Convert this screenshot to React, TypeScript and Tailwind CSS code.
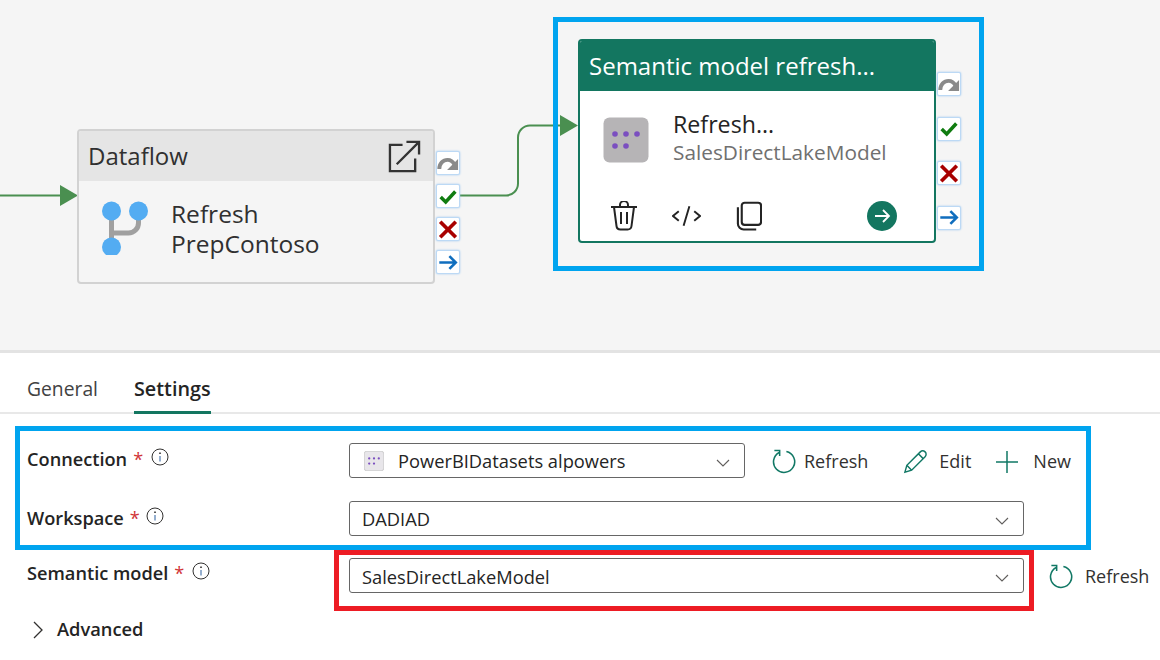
import { ReactNode } from 'react'

const font = "font-['Open_Sans','Noto_Sans',sans-serif]"

function SkipIcon() {
  return (
    <svg viewBox="0 0 24 24" className="w-[23px] h-[23px]">
      <path d="M2.500 18c0-6 4-10 9-10 3.500 0 6 2 7.500 5" fill="none" stroke="#8a8a8a" strokeWidth="4.200" />
      <path d="M23 7v12H11z" fill="#8a8a8a" />
    </svg>
  )
}

function CheckIcon() {
  return (
    <svg viewBox="0 0 24 24" className="w-[23px] h-[23px]">
      <path d="M4 12.500l5.500 5.500L20 6.500" fill="none" stroke="#107c10" strokeWidth="3.800" />
    </svg>
  )
}

function CrossIcon() {
  return (
    <svg viewBox="0 0 24 24" className="w-[23px] h-[23px]">
      <path d="M3.500 3.500l17 17M20.500 3.500l-17 17" fill="none" stroke="#a80000" strokeWidth="4" />
    </svg>
  )
}

function ArrowIcon() {
  return (
    <svg viewBox="0 0 24 24" className="w-[23px] h-[23px]">
      <path d="M2.500 12h18M13.500 5l7 7-7 7" fill="none" stroke="#106ebe" strokeWidth="2.800" />
    </svg>
  )
}

function Ports({ className, gap }: { className: string; gap: string }) {
  const icons = [<SkipIcon />, <CheckIcon />, <CrossIcon />, <ArrowIcon />]
  return (
    <div className={`absolute flex flex-col ${gap} ${className}`}>
      {icons.map((icon, i) => (
        <div
          key={i}
          className="w-6 h-6 bg-white border border-[#bcd9f5] rounded-[2px] flex items-center justify-center shadow-[0_0_2px_#9cc7f0]"
        >
          {icon}
        </div>
      ))}
    </div>
  )
}

function DatasetTile({ big }: { big?: boolean }) {
  return (
    <svg viewBox="0 0 46 46" className={big ? 'w-[46px] h-[46px]' : 'w-[20px] h-[20px]'}>
      <rect x="0.500" y="0.500" width="45" height="45" rx="6" fill={big ? '#b6b4b6' : '#e8e6ea'} stroke={big ? 'none' : '#c8c8c8'} strokeWidth="2" />
      <g fill="#7b4fc0">
        <circle cx="12" cy="17" r={big ? 2.800 : 2.600} />
        <circle cx="23" cy="17" r={big ? 2.800 : 2.600} />
        <circle cx="34" cy="17" r={big ? 2.800 : 2.600} />
        <circle cx="12" cy="29" r={big ? 2.800 : 2.600} />
        <circle cx="23" cy="29" r={big ? 2.800 : 2.600} />
      </g>
    </svg>
  )
}

function RefreshIcon() {
  return (
    <svg viewBox="0 0 26 26" className="w-[25px] h-[25px]" fill="none" stroke="#117865" strokeWidth="1.600">
      <path d="M8.500 3.600A11 11 0 1 0 16 2.600" />
      <path d="M3.500 1.500h5.500v5.800" />
    </svg>
  )
}

function Chevron() {
  return (
    <svg viewBox="0 0 14 8" className="w-[14px] h-2 absolute right-[14px] top-[15px]" fill="none" stroke="#605e5c" strokeWidth="1.100">
      <path d="M1 1l6 6 6-6" />
    </svg>
  )
}

function Info() {
  return (
    <svg viewBox="0 0 18 18" className="w-[18px] h-[18px]" fill="none" stroke="#323130" strokeWidth="1">
      <circle cx="9" cy="9" r="8" />
      <path d="M9 8v5.500" stroke="#2b5f9e" />
      <circle cx="9" cy="5.200" r="0.500" fill="#323130" />
    </svg>
  )
}

function Label({ text, gap }: { text: string; gap: string }) {
  return (
    <div className="w-[322px] shrink-0 flex items-start text-[18.200px] leading-[24px] font-semibold text-[#242424]">
      <span>{text}</span>
      <span className="ml-[6px] text-[#d13438] font-normal">*</span>
      <span className={`${gap} mt-[1px]`}>
        <Info />
      </span>
    </div>
  )
}

function Select({ width, children }: { width: string; children: ReactNode }) {
  return (
    <div className={`relative ${width} h-[35px] shrink-0 border border-[#666] rounded-[3px] flex items-center text-[18.300px] text-[#242424] bg-white`}>
      {children}
      <Chevron />
    </div>
  )
}

function Action({ icon, label, className }: { icon: ReactNode; label: string; className?: string }) {
  return (
    <div className={`flex items-center gap-[8px] text-[18px] text-[#323130] ${className ?? ''}`}>
      {icon}
      <span>{label}</span>
    </div>
  )
}

export default function App() {
  return (
    <div className={`w-[1160px] h-[660px] overflow-hidden bg-white relative ${font}`}>
      {/* Canvas */}
      <div className="relative h-[350px] bg-[#f5f5f5]">
        <svg className="absolute left-0 top-0" width="1160" height="350" fill="none">
          <path d="M0 195.500h62" stroke="#4a8f50" strokeWidth="2" />
          <path d="M60 185l18 10.500-18 10.500z" fill="#4a8f50" />
          <path d="M460 195.500h46a12 12 0 0 0 12-12v-46a12 12 0 0 1 12-12h32" stroke="#4a8f50" strokeWidth="2" />
          <path d="M560 115l18 10.500-18 10.500z" fill="#4a8f50" />
        </svg>

        {/* Dataflow node */}
        <div className="absolute left-[77px] top-[129px] w-[358px] h-[155px] bg-[#f5f5f5] border-2 border-[#d2d2d2] rounded-[4px] overflow-hidden">
          <div className="h-[50px] bg-[#e5e5e5] flex items-center justify-between pl-[9px] pr-[12px]">
            <span className="text-[24px] text-[#303030]">Dataflow</span>
            <svg viewBox="0 0 34 34" className="w-[33px] h-[33px]" fill="none" stroke="#333" strokeWidth="2.400">
              <path d="M15 5H2v27h26V19" />
              <path d="M9 25L32 2M19 2h13v13" />
            </svg>
          </div>
          <div className="flex pl-[22px] pt-[20px]">
            <svg viewBox="0 0 46 54" className="w-[47px] h-[54px] shrink-0">
              <path d="M10 14v30M10 32h17a10 10 0 0 0 10-10v-8" fill="none" stroke="#a0a0a0" strokeWidth="5" />
              <circle cx="10" cy="10" r="9.500" fill="#53acf2" />
              <circle cx="37" cy="10" r="9.500" fill="#53acf2" />
              <circle cx="10" cy="46" r="9.500" fill="#53acf2" />
            </svg>
            <div className="ml-[23px] text-[24.500px] leading-[30px] text-[#303030] -mt-[2px]">
              <div>Refresh</div>
              <div>PrepContoso</div>
            </div>
          </div>
        </div>
        <Ports className="left-[436px] top-[151px]" gap="gap-[9px]" />

        {/* Semantic model node */}
        <div className="absolute left-[578px] top-[39px] w-[358px] h-[204px] bg-white border-2 border-[#137660] rounded-[4px] overflow-hidden">
          <div className="h-[50px] bg-[#137660] flex items-center pl-[9px] text-[24px] text-white">
            Semantic model refresh...
          </div>
          <div className="flex pl-[23px] pt-[26px]">
            <DatasetTile big />
            <div className="ml-[24px] -mt-[8px]">
              <div className="text-[23.200px] leading-[31px] text-[#242424]">Refresh...</div>
              <div className="text-[20.800px] leading-[25px] text-[#707070]">SalesDirectLakeModel</div>
            </div>
          </div>
          <div className="flex items-center pl-[30px] pr-[37px] pt-[36px] justify-between">
            <div className="flex items-center gap-[34px]">
              <svg viewBox="0 0 28 30" className="w-[28px] h-[30px]" fill="none" stroke="#242424" strokeWidth="2">
                <path d="M1 6h26M10 6V4a3 3 0 0 1 8 0v2M4 6l2.500 19a4 4 0 0 0 4 3.500h7a4 4 0 0 0 4-3.500L24 6M11 11v12M17 11v12" />
              </svg>
              <svg viewBox="0 0 30 22" className="w-[29px] h-[22px]" fill="none" stroke="#242424" strokeWidth="2">
                <path d="M7 6l-6 5 6 5M23 6l6 5-6 5M18 1l-6 20" />
              </svg>
              <svg viewBox="0 0 28 30" className="w-[27px] h-[30px]" fill="none" stroke="#242424" strokeWidth="2.200">
                <rect x="7" y="1.200" width="20" height="23" rx="3" />
                <path d="M3 6v17a6 6 0 0 0 6 6h13" />
              </svg>
            </div>
            <svg viewBox="0 0 30 30" className="w-[30px] h-[30px]">
              <circle cx="15" cy="15" r="15" fill="#137660" />
              <path d="M8 15h14M16 9l6 6-6 6" fill="none" stroke="#fff" strokeWidth="1.800" />
            </svg>
          </div>
        </div>
        <Ports className="left-[937px] top-[72px]" gap="gap-[20.500px]" />

        {/* Highlight */}
        <div className="absolute left-[553px] top-[17px] w-[431px] h-[254px] border-[5px] border-[#00a4ef]" />
      </div>

      {/* Tabs */}
      <div className="border-t-[3px] border-[#e3e3e3]">
        <div className="h-[61px] border-b-2 border-[#e8e8e8] flex pl-[27px] gap-[36px]">
          <div className="h-full pt-[22px] text-[19.300px] text-[#424242]">General</div>
          <div className="h-[61px] pt-[23px] text-[19.800px] leading-[26px] font-semibold text-[#242424] border-b-[3px] border-[#137660]">Settings</div>
        </div>
      </div>

      {/* Form */}
      <div className="pl-[27px]">
        <div className="flex items-start pt-[29px] h-[87px]">
          <div className="pt-[4px]">
            <Label text="Connection" gap="ml-[8px]" />
          </div>
          <Select width="w-[396px]">
            <span className="ml-[14px]">
              <DatasetTile />
            </span>
            <span className="ml-[14px]">PowerBIDatasets alpowers</span>
          </Select>
          <Action icon={<RefreshIcon />} label="Refresh" className="ml-[26px] mt-[5px]" />
          <Action
            icon={
              <svg viewBox="0 0 26 26" className="w-[25px] h-[25px]" fill="none" stroke="#117865" strokeWidth="1.500">
                <path d="M2 24l2-7L18 3a3 3 0 0 1 5 5L9 22zM4 17l5 5M16 5l5 5" />
              </svg>
            }
            label="Edit"
            className="ml-[35px] mt-[5px] gap-[11px]"
          />
          <Action
            icon={
              <svg viewBox="0 0 24 24" className="w-[24px] h-[24px]" fill="none" stroke="#117865" strokeWidth="1.500">
                <path d="M12 1v22M1 12h22" />
              </svg>
            }
            label="New"
            className="ml-[24px] mt-[5px] gap-[14px]"
          />
        </div>
        <div className="flex items-start h-[57px]">
          <div className="pt-[5px]">
            <Label text="Workspace" gap="ml-[6px]" />
          </div>
          <Select width="w-[675px]">
            <span className="ml-[12px]">DADIAD</span>
          </Select>
        </div>
        <div className="flex items-start h-[59px]">
          <div className="pt-[3px]">
            <Label text="Semantic model" gap="ml-[8px]" />
          </div>
          <Select width="w-[675px]">
            <span className="ml-[12px] mt-[2px]">SalesDirectLakeModel</span>
          </Select>
          <Action icon={<RefreshIcon />} label="Refresh" className="ml-[24px] mt-[5px] gap-[12px]" />
        </div>
        <div className="flex items-center text-[18.300px] font-semibold text-[#242424]">
          <svg viewBox="0 0 10 18" className="ml-[6px] w-[10px] h-[18px]" fill="none" stroke="#323130" strokeWidth="1.300">
            <path d="M1 1l8 8-8 8" />
          </svg>
          <span className="ml-[14px] -mt-[2px]">Advanced</span>
        </div>
      </div>

      {/* Highlights */}
      <div className="absolute left-[15px] top-[426px] w-[1076px] h-[124px] border-[5px] border-[#00a4ef]" />
      <div className="absolute left-[334px] top-[550px] w-[700px] h-[61px] border-[5px] border-[#ed1c24]" />
    </div>
  )
}
